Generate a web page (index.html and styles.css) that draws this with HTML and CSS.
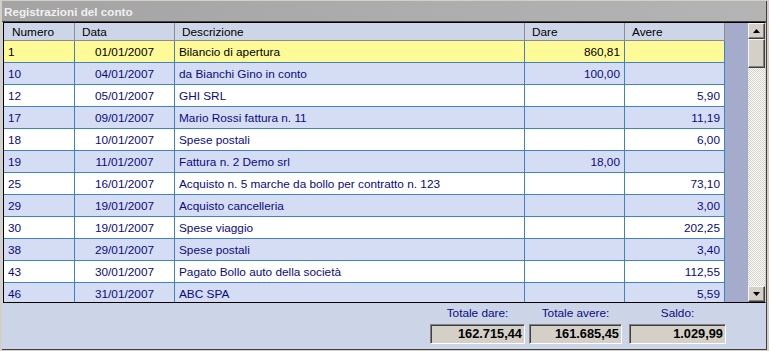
FILE: index.html
```html
<!DOCTYPE html>
<html lang="it">
<head>
<meta charset="utf-8">
<title>Registrazioni del conto</title>
<link rel="stylesheet" href="styles.css">
</head>
<body>
<div class="win">
  <div class="frame">
    <div class="title">Registrazioni del conto</div>
    <div class="body">
      <div class="grid">
        <div class="table">
          <div class="row head">
            <div class="c">Numero</div>
            <div class="c">Data</div>
            <div class="c">Descrizione</div>
            <div class="c">Dare</div>
            <div class="c">Avere</div>
          </div>
          <div class="rows">
            <div class="row sel"><div class="c">1</div><div class="c ctr">01/01/2007</div><div class="c">Bilancio di apertura</div><div class="c num">860,81</div><div class="c num"></div></div>
            <div class="row alt"><div class="c">10</div><div class="c ctr">04/01/2007</div><div class="c">da Bianchi Gino in conto</div><div class="c num">100,00</div><div class="c num"></div></div>
            <div class="row"><div class="c">12</div><div class="c ctr">05/01/2007</div><div class="c">GHI SRL</div><div class="c num"></div><div class="c num">5,90</div></div>
            <div class="row alt"><div class="c">17</div><div class="c ctr">09/01/2007</div><div class="c">Mario Rossi fattura n. 11</div><div class="c num"></div><div class="c num">11,19</div></div>
            <div class="row"><div class="c">18</div><div class="c ctr">10/01/2007</div><div class="c">Spese postali</div><div class="c num"></div><div class="c num">6,00</div></div>
            <div class="row alt"><div class="c">19</div><div class="c ctr">11/01/2007</div><div class="c">Fattura n. 2 Demo srl</div><div class="c num">18,00</div><div class="c num"></div></div>
            <div class="row"><div class="c">25</div><div class="c ctr">16/01/2007</div><div class="c">Acquisto n. 5 marche da bollo per contratto n. 123</div><div class="c num"></div><div class="c num">73,10</div></div>
            <div class="row alt"><div class="c">29</div><div class="c ctr">19/01/2007</div><div class="c">Acquisto cancelleria</div><div class="c num"></div><div class="c num">3,00</div></div>
            <div class="row"><div class="c">30</div><div class="c ctr">19/01/2007</div><div class="c">Spese viaggio</div><div class="c num"></div><div class="c num">202,25</div></div>
            <div class="row alt"><div class="c">38</div><div class="c ctr">29/01/2007</div><div class="c">Spese postali</div><div class="c num"></div><div class="c num">3,40</div></div>
            <div class="row"><div class="c">43</div><div class="c ctr">30/01/2007</div><div class="c">Pagato Bollo auto della società</div><div class="c num"></div><div class="c num">112,55</div></div>
            <div class="row alt"><div class="c">46</div><div class="c ctr">31/01/2007</div><div class="c">ABC SPA</div><div class="c num"></div><div class="c num">5,59</div></div>
          </div>
        </div>
        <div class="strip"></div>
        <div class="scroll">
          <div class="btn"><svg width="7" height="4" viewBox="0 0 7 4"><polygon points="3.5,0 7,4 0,4" fill="#000"/></svg></div>
          <div class="track">
            <div class="thumb"></div>
          </div>
          <div class="btn"><svg width="7" height="4" viewBox="0 0 7 4"><polygon points="0,0 7,0 3.5,4" fill="#000"/></svg></div>
        </div>
      </div>
      <div class="footer">
        <div class="tot t1">
          <div class="lbl">Totale dare:</div>
          <div class="box">162.715,44</div>
        </div>
        <div class="tot t2">
          <div class="lbl">Totale avere:</div>
          <div class="box">161.685,45</div>
        </div>
        <div class="tot t3">
          <div class="lbl">Saldo:</div>
          <div class="box">1.029,99</div>
        </div>
      </div>
    </div>
  </div>
</div>
</body>
</html>
```
FILE: styles.css
```css
html, body {
  margin: 0;
  padding: 0;
  background: #d4d0c8;
}
.win {
  width: 769px;
  height: 351px;
  box-sizing: border-box;
  padding: 1px 2px 1px 2px;
  background: #d4d0c8;
  font-family: "Liberation Sans", Arial, sans-serif;
  font-size: 11.8px;
}
.frame {
  height: 100%;
  box-sizing: border-box;
  border-right: 1px solid #404040;
  border-bottom: 1px solid #404040;
  display: flex;
  flex-direction: column;
}
.title {
  height: 20px;
  line-height: 21px;
  padding-left: 2px;
  font-weight: bold;
  font-size: 11.7px;
  color: #f0f0f0;
  background: linear-gradient(to right, #a4a4a4, #b4b4b4);
  white-space: nowrap;
}
.body {
  flex: 1;
  border-top: 1px solid #404040;
  background: #ccd5e7;
  padding-left: 1px;
  display: flex;
  flex-direction: column;
}
.grid {
  display: flex;
  height: 281px;
  box-sizing: border-box;
  border-top: 1px solid #000;
  border-left: 1px solid #000;
  border-bottom: 1px solid #000;
  border-right: 1px solid #d4d0c8;
}
.table {
  width: 721px;
  overflow: hidden;
  background: #ccd5e7;
}
.row {
  display: grid;
  grid-template-columns: 71px 100px 350px 100px 100px;
  height: 22px;
  background: #fff;
  color: #0a0a84;
}
.row .c {
  box-sizing: border-box;
  border-right: 1px solid #3f82c4;
  border-bottom: 1px solid #3f82c4;
  padding: 0 4px;
  line-height: 23px;
  white-space: nowrap;
  overflow: hidden;
}
.row.alt { background: #d5ddf5; }
.row.sel { background: #fefa98; color: #000; }
.row .ctr { text-align: center; }
.row .num { text-align: right; }
.row.head {
  height: 18px;
  background: #cdd6e8;
  color: #000;
}
.row.head .c {
  border-right: 1px solid #8c8c8c;
  border-bottom: 1px solid #8c8c8c;
  padding-left: 7px;
  line-height: 18px;
}
.row.head .c:first-child { padding-left: 8px; }
.strip {
  width: 23px;
  background: #a5abca;
}
.scroll {
  width: 17px;
  display: flex;
  flex-direction: column;
}
.btn {
  height: 16px;
  box-sizing: border-box;
  background: #d4d0c8;
  border-top: 1px solid #f4f4f4;
  border-left: 1px solid #f4f4f4;
  border-right: 1px solid #404040;
  border-bottom: 1px solid #404040;
  box-shadow: inset -1px -1px 0 #808080;
  display: flex;
  align-items: center;
  justify-content: center;
}
.btn svg { display: block; }
.track {
  flex: 1;
  background-color: #fff;
  background-image: repeating-conic-gradient(#d4d0c8 0 25%, #fff 0 50%);
  background-size: 2px 2px;
}
.thumb {
  height: 29px;
  box-sizing: border-box;
  background: #d4d0c8;
  border-top: 1px solid #f4f4f4;
  border-left: 1px solid #f4f4f4;
  border-right: 1px solid #404040;
  border-bottom: 1px solid #404040;
  box-shadow: inset -1px -1px 0 #808080;
}
.footer {
  flex: 1;
  display: flex;
  justify-content: flex-end;
  padding: 3px 40px 0 0;
}
.tot {
  display: flex;
  flex-direction: column;
  align-items: stretch;
}
.t1 { width: 95px; }
.t2 { width: 93px; margin-left: 4px; }
.t3 { width: 97px; margin-left: 7px; }
.lbl {
  height: 14px;
  line-height: 15px;
  text-align: center;
  color: #0a0a84;
  font-size: 11.8px;
}
.box {
  margin-top: 4px;
  height: 20px;
  box-sizing: border-box;
  background: #d4d0c8;
  border-top: 1px solid #808080;
  border-left: 1px solid #808080;
  border-right: 1px solid #fff;
  border-bottom: 1px solid #fff;
  box-shadow: inset 1px 1px 0 #404040;
  text-align: right;
  padding-right: 2px;
  font-weight: bold;
  font-size: 12.8px;
  line-height: 18px;
  color: #000;
}
```
